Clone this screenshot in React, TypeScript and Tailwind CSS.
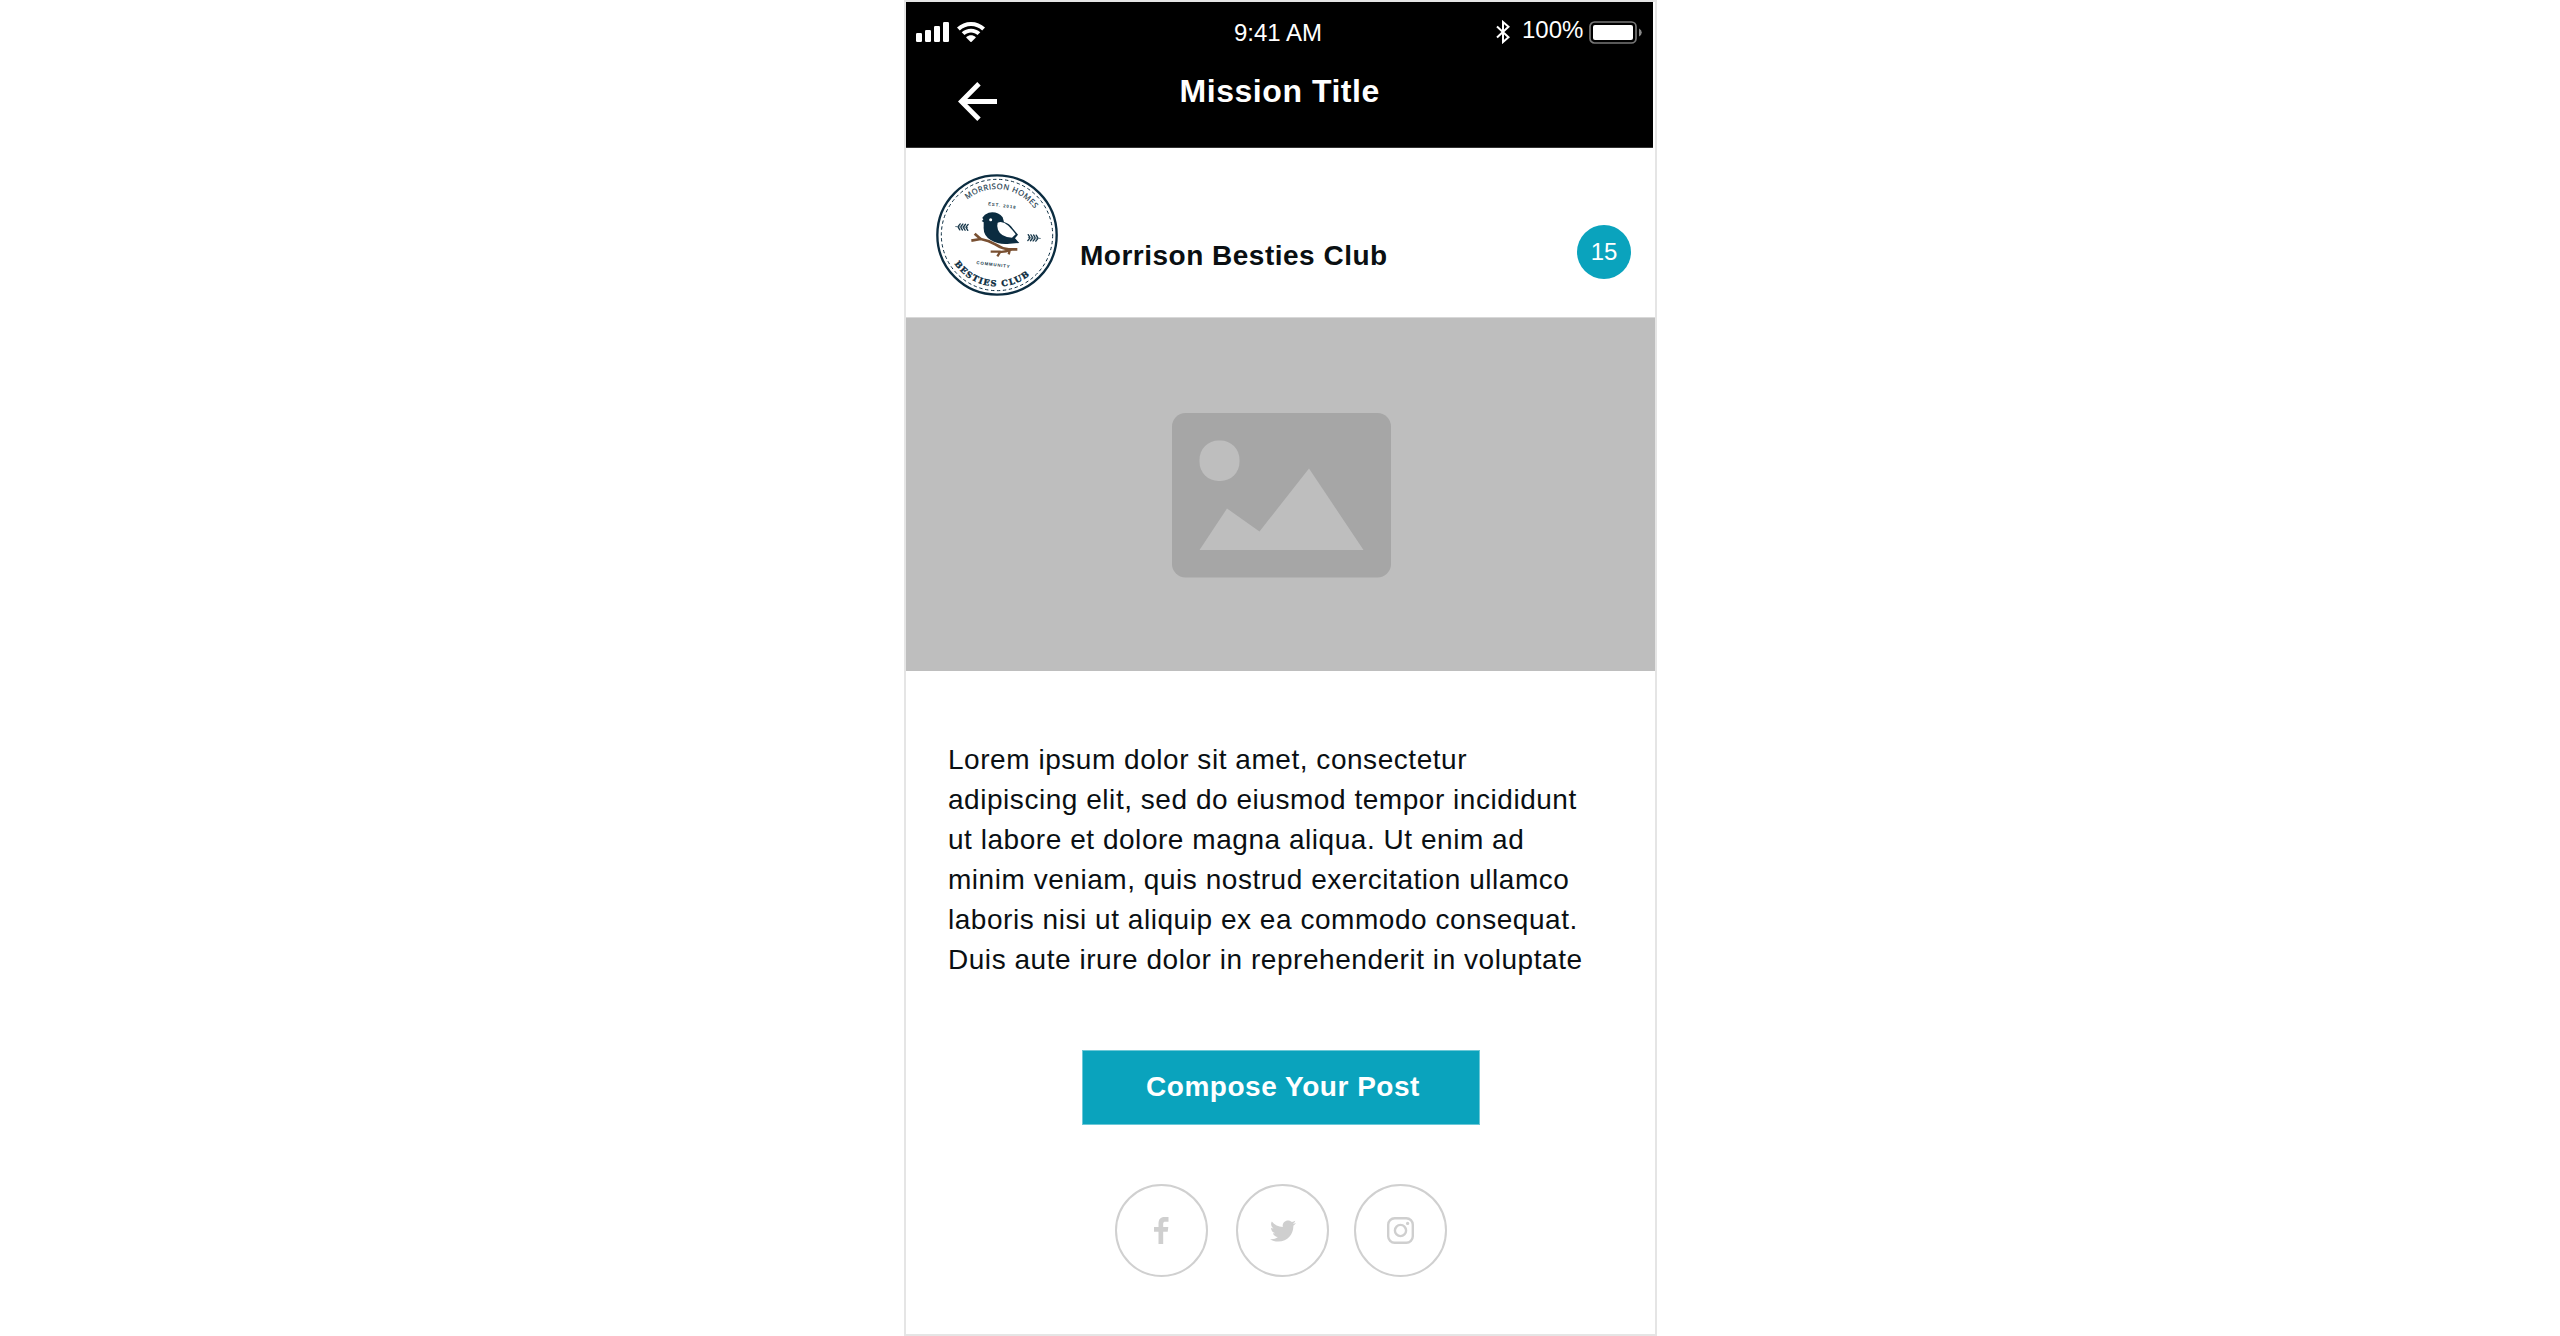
import type { ReactNode } from "react";
import { FaTwitter } from "react-icons/fa";

function SignalIcon() {
  return (
    <svg className="mt-5 ml-2.5 h-5 w-[33px] shrink-0" viewBox="0 0 33 20" fill="#fff">
      <rect x="0" y="11" width="6" height="9" rx="1.2" />
      <rect x="9" y="8" width="6" height="12" rx="1.2" />
      <rect x="18" y="4" width="6" height="16" rx="1.2" />
      <rect x="27" y="0" width="6" height="20" rx="1.2" />
    </svg>
  );
}

function WifiIcon() {
  return (
    <svg className="mt-5 ml-2 h-5 w-7 shrink-0" viewBox="0 0 28 20" fill="#fff">
      <path d="M14 0C19.4 0 24.2 2 28 5.6L25.2 8.5C22.1 5.7 18.2 4.1 14 4.1S5.9 5.7 2.8 8.5L0 5.6C3.8 2 8.6 0 14 0Z" />
      <path d="M14 6.700C17.500 6.700 20.800 8 23.300 10.300L20.500 13.100C18.700 11.500 16.500 10.600 14 10.600S9.300 11.500 7.500 13.100L4.700 10.300C7.200 8 10.500 6.700 14 6.700Z" />
      <path d="M14 13.200C15.700 13.200 17.300 13.800 18.600 14.900C18.900 15.200 18.900 15.500 18.600 15.800L14.600 19.700Q14 20.200 13.400 19.700L9.400 15.800C9.100 15.500 9.100 15.200 9.400 14.900C10.700 13.800 12.300 13.200 14 13.200Z" />
    </svg>
  );
}

function ClubLogo() {
  const leaf = (
    <g stroke="#17374a" fill="none" strokeLinecap="round">
      <path d="M-19 0H17" strokeWidth="2" />
      {[-11, -3, 5, 13].map((x) => (
        <path key={x} d={`M${x} -2l5 -7M${x} 2l5 7`} strokeWidth="4" />
      ))}
    </g>
  );
  return (
    <svg className="mt-[25px] ml-[29px] h-[124px] w-[124px] shrink-0" viewBox="44 37 372 372">
      <circle cx="230" cy="223" r="179" fill="#fff" stroke="#0b2c40" strokeWidth="7" />
      <circle cx="230" cy="223" r="167" fill="none" stroke="#0b2c40" strokeWidth="3" strokeDasharray="10 8" />
      <defs>
        <path id="arc-top" d="M141 117A137 137 0 0 1 345 149" />
        <path id="arc-bottom" d="M102 309A156 156 0 0 0 335 338" />
      </defs>
      <text fill="#17374a" fontFamily="Open Sans, sans-serif" fontSize="23" stroke="#17374a" strokeWidth="0.500">
        <textPath href="#arc-top" textLength="228" lengthAdjust="spacing">MORRISON HOMES</textPath>
      </text>
      <text fill="#0b2c40" fontFamily="DejaVu Serif, serif" fontWeight="700" fontSize="25" stroke="#0b2c40" strokeWidth="1">
        <textPath href="#arc-bottom" textLength="256" lengthAdjust="spacing">BESTIES CLUB</textPath>
      </text>
      <text transform="translate(203 134) rotate(7)" fill="#17374a" fontFamily="Liberation Sans, sans-serif" fontWeight="700" fontSize="13" textLength="83">
        EST. 2018
      </text>
      <text transform="translate(168 310) rotate(7)" fill="#17374a" fontFamily="Liberation Sans, sans-serif" fontWeight="700" fontSize="13" textLength="100">
        COMMUNITY
      </text>
      <g transform="translate(125 199) rotate(4)">{leaf}</g>
      <g transform="translate(341 232) rotate(184)">{leaf}</g>
      <g stroke="#795032" strokeWidth="8" fill="none" strokeLinejoin="round">
        <path d="M153 240L181 235Q204 239 225 251Q245 264 265 266L291 266" />
        <path d="M163 219L181 235" />
        <path d="M273 267Q252 275 238 273L211 273M240 273L231 287M268 270L265 281" strokeWidth="7" />
      </g>
      <path d="M186 171Q192 160 205 156Q232 151 247 170L251 184Q267 188 278 204L293 222L284 233L297 247L268 249Q236 253 211 238Q188 225 190 198L190 185L184 181L189 177Z" fill="#0b2c40" />
      <path d="M232 186Q248 180 264 195Q276 207 286 221L275 231Q241 229 233 207Q229 194 232 186Z" fill="#fff" />
      <circle cx="211" cy="177" r="4.500" fill="#fff" />
    </svg>
  );
}

function SocialCircle({ children, className }: { children: ReactNode; className: string }) {
  return (
    <button className={`flex size-[93px] items-center justify-center rounded-full border-2 border-[#d0d0d0] text-[#cfcfcf] ${className}`}>
      {children}
    </button>
  );
}

const bodyLines = [
  "Lorem ipsum dolor sit amet, consectetur",
  "adipiscing elit, sed do eiusmod tempor incididunt",
  "ut labore et dolore magna aliqua. Ut enim ad",
  "minim veniam, quis nostrud exercitation ullamco",
  "laboris nisi ut aliquip ex ea commodo consequat.",
  "Duis aute irure dolor in reprehenderit in voluptate",
];

export default function App() {
  return (
    <div className="h-[1336px] w-full bg-white font-['Liberation_Sans',sans-serif] text-[#0a0f12]">
      <main className="ml-[904px] flex h-[1336px] w-[753px] flex-col border-2 border-[#e5e5e5] bg-white">
        <header className="h-[146px] w-[747px] shrink-0 border-b border-[#333] bg-black text-white">
          <div className="flex h-[69px] items-start text-2xl leading-[30px]">
            <SignalIcon />
            <WifiIcon />
            <span className="mt-4 ml-[249px] w-[90px] whitespace-nowrap">9:41 AM</span>
            <svg className="mt-[18px] ml-[172px] h-6 w-[14px] shrink-0" viewBox="0 0 14 24" fill="none" stroke="#fff" strokeWidth="2">
              <path d="M1 6.500L12.500 17.200L7 22V2L12.500 6.700L1 17.500" />
            </svg>
            <span className="mt-[13px] ml-[12px] w-[61px]">100%</span>
            <svg className="mt-[19px] ml-[6px] h-[23px] w-[53px] shrink-0" viewBox="0 0 53 23">
              <rect x="1" y="1" width="46" height="21" rx="4.500" fill="none" stroke="#777" strokeWidth="1.700" />
              <rect x="4" y="4" width="40" height="15" rx="2" fill="#fff" />
              <path d="M50 7.500Q52.800 9 52.800 11.500T50 15.500Z" fill="#888" />
            </svg>
          </div>
          <div className="flex items-start">
            <svg className="mt-[11px] ml-[52px] h-[39px] w-[39px] shrink-0" viewBox="0 0 39 39" fill="none" stroke="#fff" strokeWidth="4.800">
              <path d="M39 19.500H4M21 1.700L3.300 19.500L21 37.300" />
            </svg>
            <h1 className="ml-[182.500px] text-[32px] leading-10 font-bold tracking-[0.55px] whitespace-nowrap">Mission Title</h1>
          </div>
        </header>

        <section className="flex h-[169px] shrink-0 items-start">
          <ClubLogo />
          <h2 className="mt-[88px] ml-[21px] w-[495px] text-[28px] leading-10 font-bold tracking-[0.5px]">Morrison Besties Club</h2>
          <span className="mt-[77px] ml-[2px] flex size-[54px] shrink-0 justify-center rounded-full bg-[#0aa3bd] pt-[2px] text-2xl leading-[50px] text-white">15</span>
        </section>

        <section className="flex h-[354px] shrink-0 justify-center border-t border-[#d8d8d8] bg-[#bebebe] pt-[94.500px] pl-px">
          <svg className="h-[165px] w-[219px]" viewBox="0 0 219 165">
            <rect width="219" height="164.500" rx="13.500" fill="#a6a6a6" />
            <rect x="27.500" y="27.500" width="40" height="40.500" rx="19" fill="#bebebe" />
            <path d="M27.500 137L55 95.500L87.500 118.500L137 55.500L191.500 137Z" fill="#bebebe" />
          </svg>
        </section>

        <p className="mt-[69px] ml-[42px] h-60 shrink-0 text-[28px] leading-10 tracking-[0.54px] whitespace-nowrap">
          {bodyLines.map((line) => (
            <span key={line} className="block">{line}</span>
          ))}
        </p>

        <button className="mt-[70px] ml-[176px] h-[75px] w-[398px] shrink-0 border border-[#6cc8d7] bg-[#0aa3bd] pb-px pl-[4px] text-[28px] leading-10 font-bold tracking-[0.52px] text-white">
          Compose Your Post
        </button>

        <nav className="mt-[59px] ml-[209px] flex">
          <SocialCircle className="">
            <svg className="h-[27px] w-[15px]" viewBox="0 0 15 27" fill="currentColor">
              <path d="M4.500 27V14.700H0V10H4.500V6.500C4.500 2.200 6.500 0 10.500 0H14.500V4.700H11.500C9.800 4.700 9.200 5.300 9.200 7V10H14.300L13.700 14.700H9.200V27Z" />
            </svg>
          </SocialCircle>
          <SocialCircle className="ml-[28px]">
            <FaTwitter className="size-[26px]" />
          </SocialCircle>
          <SocialCircle className="ml-[25px]">
            <svg className="size-[27px]" viewBox="0 0 27 27" fill="none" stroke="currentColor" strokeWidth="2.400">
              <rect x="1.200" y="1.200" width="24.600" height="24.600" rx="6.500" />
              <circle cx="13.500" cy="13.500" r="5.600" />
              <circle cx="20.600" cy="6.400" r="1.600" fill="currentColor" stroke="none" />
            </svg>
          </SocialCircle>
        </nav>
      </main>
    </div>
  );
}
